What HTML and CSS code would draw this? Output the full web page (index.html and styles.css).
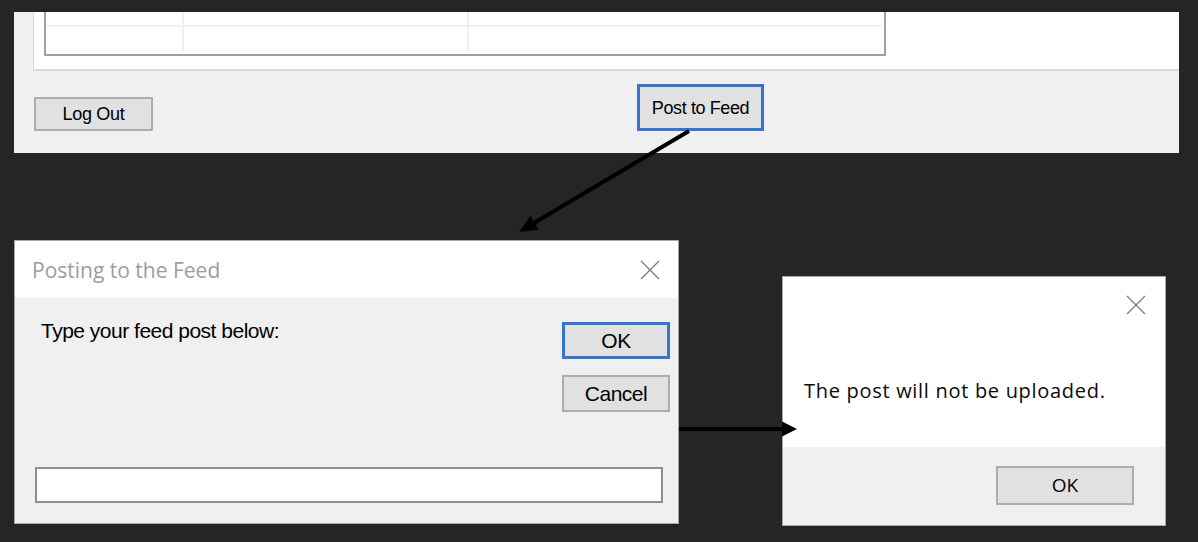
FILE: index.html
```html
<!DOCTYPE html>
<html lang="en">
<head>
<meta charset="utf-8">
<title>Post to Feed flow</title>
<link rel="stylesheet" href="styles.css">
</head>
<body>
<div class="canvas">
  <section class="window main-window">
    <div class="tabpage">
      <div class="grid">
        <div class="cell r1"></div>
        <div class="cell r1"></div>
        <div class="cell r1 last"></div>
        <div class="cell"></div>
        <div class="cell"></div>
        <div class="cell last"></div>
      </div>
    </div>
    <div class="actions">
      <button class="btn btn-logout">Log Out</button>
      <button class="btn btn-default btn-post">Post to Feed</button>
    </div>
  </section>

  <section class="dialog input-dialog">
    <div class="titlebar">
      <span class="title">Posting to the Feed</span>
      <svg class="close" viewBox="0 0 20 20" width="20" height="20"><path d="M1 1L19 19M19 1L1 19" stroke="#7f7f7f" stroke-width="1.4" fill="none"/></svg>
    </div>
    <div class="input-body">
      <div class="prompt-row">
        <span class="prompt">Type your feed post below:</span>
        <div class="btn-col">
          <button class="btn btn-default btn-dlg">OK</button>
          <button class="btn btn-dlg">Cancel</button>
        </div>
      </div>
      <div class="textbox"></div>
    </div>
  </section>

  <section class="dialog msg-dialog">
    <div class="msg-main">
      <div class="msg-head">
        <svg class="close" viewBox="0 0 20 20" width="20" height="20"><path d="M1 1L19 19M19 1L1 19" stroke="#7f7f7f" stroke-width="1.4" fill="none"/></svg>
      </div>
      <p class="message">The post will not be uploaded.</p>
    </div>
    <div class="msg-foot">
      <button class="btn btn-msg-ok">OK</button>
    </div>
  </section>

  <svg class="arrows" viewBox="0 0 1198 542" width="1198" height="542">
    <line x1="689" y1="131" x2="533" y2="223.5" stroke="#000" stroke-width="4"/>
    <polygon points="519,232 538.6,229.7 530.4,215.9" fill="#000"/>
    <line x1="679" y1="429" x2="785" y2="429" stroke="#000" stroke-width="4"/>
    <polygon points="797,429 782,421.5 782,436.5" fill="#000"/>
  </svg>
</div>
</body>
</html>
```

FILE: styles.css
```css
html, body {
  margin: 0;
  padding: 0;
  background: #252525;
}

.canvas {
  position: relative;
  width: 1198px;
  height: 542px;
  overflow: hidden;
  background: #252525;
}

/* generic button */
.btn {
  box-sizing: border-box;
  display: flex;
  align-items: center;
  justify-content: center;
  padding: 0;
  margin: 0;
  background: #e1e1e1;
  border: 2px solid #adadad;
  color: #000;
  font-family: "Liberation Sans", Arial, sans-serif;
  font-size: 21px;
  letter-spacing: -0.5px;
  line-height: 1;
}

.btn-default {
  border: 3px solid #3574d4;
}

/* top window */
.main-window {
  position: absolute;
  left: 14px;
  top: 12px;
  width: 1165px;
  height: 141px;
  background: #f0f0f0;
  display: flex;
  flex-direction: column;
}

.tabpage {
  margin-left: 19px;
  height: 57px;
  background: #fff;
  border-left: 1px solid #dadada;
  border-bottom: 2px solid #dadada;
  padding-left: 10px;
}

.grid {
  width: 838px;
  height: 42px;
  border: 2px solid #a0a0a0;
  border-top: none;
  background: #fff;
  display: grid;
  grid-template-columns: 138px 285px 413px;
  grid-template-rows: 15px 25px;
  align-content: start;
}

.cell {
  box-sizing: border-box;
  border-right: 2px solid #f0f0f0;
}

.cell.r1 {
  border-bottom: 2px solid #f0f0f0;
}

.cell.last {
  border-right: none;
}

.actions {
  flex: 1;
  display: flex;
  align-items: flex-end;
  padding: 0 0 22px 20px;
}

.btn-logout {
  width: 119px;
  height: 34px;
  font-size: 18px;
  letter-spacing: -0.3px;
}

.btn-post {
  width: 127px;
  height: 47px;
  margin-left: 484px;
  font-size: 18px;
  letter-spacing: -0.4px;
}

/* dialogs */
.dialog {
  position: absolute;
  box-sizing: border-box;
  border: 1px solid #a6a6a6;
  background: #f0f0f0;
  display: flex;
  flex-direction: column;
}

.close {
  display: block;
  flex: none;
}

.input-dialog {
  left: 14px;
  top: 240px;
  width: 665px;
  height: 284px;
}

.titlebar {
  height: 57px;
  background: #fff;
  display: flex;
  align-items: center;
  justify-content: space-between;
  padding: 0 18px 0 17px;
}

.title {
  font-family: "Open Sans", "Noto Sans", sans-serif;
  font-size: 21px;
  color: #9d9d9d;
}

.input-body {
  flex: 1;
  display: flex;
  flex-direction: column;
  padding: 21px 8px 20px 20px;
}

.prompt-row {
  display: flex;
  justify-content: space-between;
  align-items: flex-start;
}

.prompt {
  margin-left: 6px;
  font-family: "Liberation Sans", Arial, sans-serif;
  font-size: 21px;
  letter-spacing: -0.5px;
  color: #000;
}

.btn-col {
  display: flex;
  flex-direction: column;
  gap: 16px;
  margin-top: 3px;
}

.btn-dlg {
  width: 108px;
  height: 37px;
}

.textbox {
  margin-top: auto;
  box-sizing: border-box;
  width: 628px;
  height: 36px;
  background: #fff;
  border: 2px solid #8e8e8e;
}

/* message dialog */
.msg-dialog {
  left: 782px;
  top: 276px;
  width: 384px;
  height: 250px;
  background: #fff;
}

.msg-main {
  height: 170px;
  display: flex;
  flex-direction: column;
}

.msg-head {
  height: 56px;
  display: flex;
  justify-content: flex-end;
  align-items: center;
  padding-right: 19px;
}

.message {
  margin: 44px 0 0 21px;
  font-family: "Open Sans", "Noto Sans", sans-serif;
  font-size: 20px;
  letter-spacing: 0.7px;
  color: #0a0a0a;
}

.msg-foot {
  flex: 1;
  background: #f0f0f0;
  display: flex;
  justify-content: flex-end;
  align-items: flex-start;
  padding: 19px 31px 0 0;
}

.btn-msg-ok {
  width: 138px;
  height: 39px;
  font-family: "Open Sans", "Noto Sans", sans-serif;
  font-size: 19px;
  letter-spacing: 0;
}

/* annotation arrows */
.arrows {
  position: absolute;
  left: 0;
  top: 0;
  pointer-events: none;
}
```
